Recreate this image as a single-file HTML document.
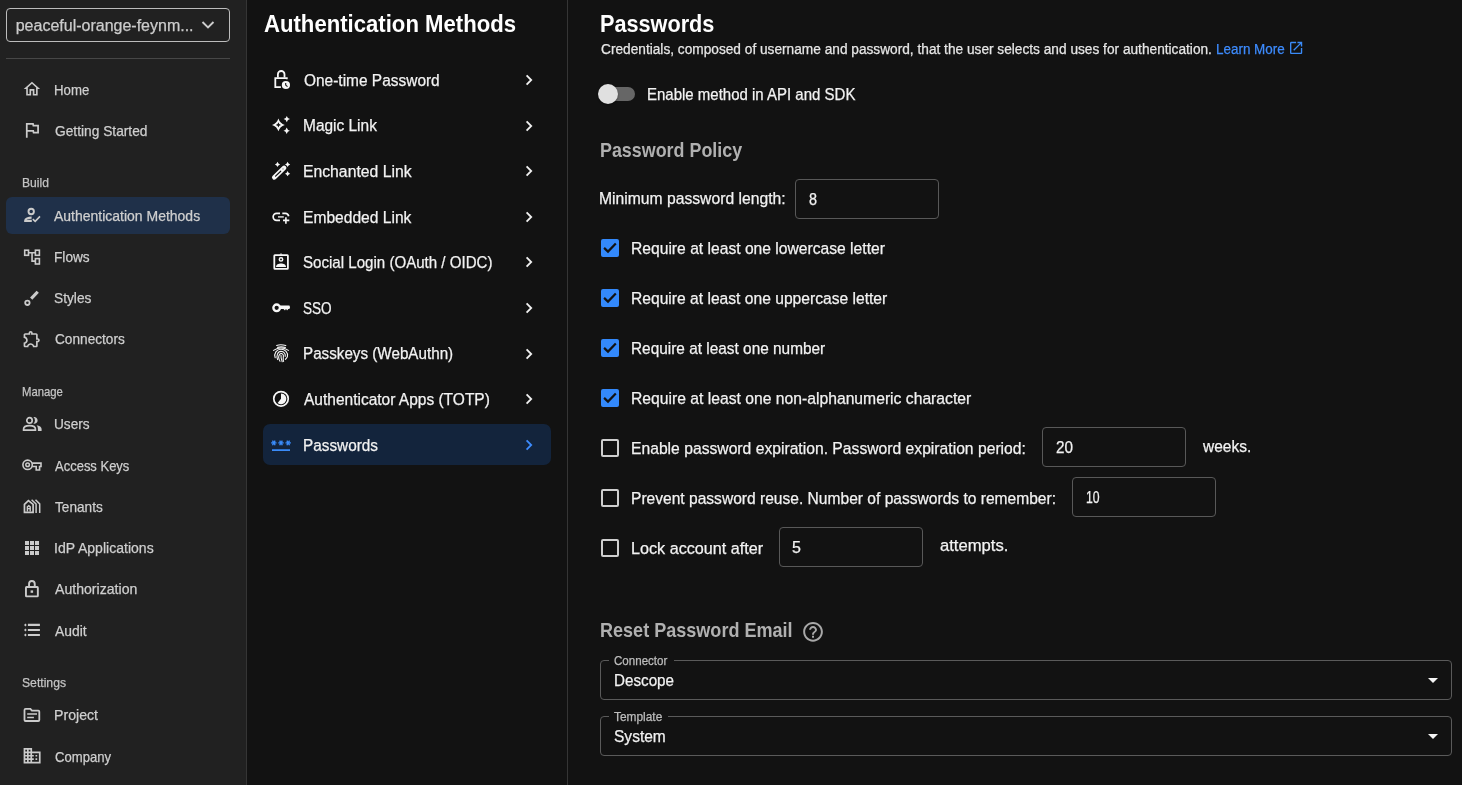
<!DOCTYPE html>
<html><head><meta charset="utf-8"><style>
html,body{margin:0;padding:0;}
body{width:1462px;height:785px;overflow:hidden;background:#121212;position:relative;font-family:"Liberation Sans",sans-serif;}
.t{position:absolute;line-height:1;white-space:pre;transform-origin:0 0;-webkit-text-stroke:0.25px currentColor;}
svg{overflow:visible}
</style></head><body>
<div style="position:absolute;left:0px;top:0px;width:246px;height:785px;box-sizing:border-box;background:#212121"></div><div style="position:absolute;left:246px;top:0px;width:1px;height:785px;box-sizing:border-box;background:#353535"></div><div style="position:absolute;left:567px;top:0px;width:1px;height:785px;box-sizing:border-box;background:#353535"></div><div style="position:absolute;left:6px;top:8px;width:224px;height:34px;box-sizing:border-box;border:1px solid #bdbdbd;border-radius:4px"></div><div style="position:absolute;left:6px;top:58px;width:224px;height:1px;box-sizing:border-box;background:#474747"></div><div style="position:absolute;left:6px;top:197px;width:224px;height:37px;box-sizing:border-box;background:#1f3049;border-radius:6px"></div><div style="position:absolute;left:263px;top:424px;width:288px;height:41px;box-sizing:border-box;background:#13243c;border-radius:7px"></div><div style="position:absolute;left:601px;top:87px;width:34px;height:14px;box-sizing:border-box;background:#666666;border-radius:7px"></div><div style="position:absolute;left:598px;top:84px;width:20px;height:20px;box-sizing:border-box;background:#e0e0e0;border-radius:50%;box-shadow:0 1px 2px rgba(0,0,0,.4)"></div><div style="position:absolute;left:795px;top:179px;width:144px;height:40px;box-sizing:border-box;border:1px solid #585858;border-radius:4px"></div><div style="position:absolute;left:1042px;top:427px;width:144px;height:40px;box-sizing:border-box;border:1px solid #585858;border-radius:4px"></div><div style="position:absolute;left:1072px;top:477px;width:144px;height:40px;box-sizing:border-box;border:1px solid #585858;border-radius:4px"></div><div style="position:absolute;left:779px;top:527px;width:144px;height:40px;box-sizing:border-box;border:1px solid #585858;border-radius:4px"></div><div style="position:absolute;left:601px;top:239px;width:18px;height:18px;box-sizing:border-box;background:#3389fb;border-radius:2px"></div><svg style="position:absolute;left:601px;top:239px" width="18" height="18" viewBox="0 0 18 18"><path d="M3.1 8.9 L7 12.6 L14.8 4.6" fill="none" stroke="#121212" stroke-width="2.2"/></svg><div style="position:absolute;left:601px;top:289px;width:18px;height:18px;box-sizing:border-box;background:#3389fb;border-radius:2px"></div><svg style="position:absolute;left:601px;top:289px" width="18" height="18" viewBox="0 0 18 18"><path d="M3.1 8.9 L7 12.6 L14.8 4.6" fill="none" stroke="#121212" stroke-width="2.2"/></svg><div style="position:absolute;left:601px;top:339px;width:18px;height:18px;box-sizing:border-box;background:#3389fb;border-radius:2px"></div><svg style="position:absolute;left:601px;top:339px" width="18" height="18" viewBox="0 0 18 18"><path d="M3.1 8.9 L7 12.6 L14.8 4.6" fill="none" stroke="#121212" stroke-width="2.2"/></svg><div style="position:absolute;left:601px;top:389px;width:18px;height:18px;box-sizing:border-box;background:#3389fb;border-radius:2px"></div><svg style="position:absolute;left:601px;top:389px" width="18" height="18" viewBox="0 0 18 18"><path d="M3.1 8.9 L7 12.6 L14.8 4.6" fill="none" stroke="#121212" stroke-width="2.2"/></svg><div style="position:absolute;left:601px;top:439px;width:18px;height:18px;box-sizing:border-box;border:2px solid #cfcfcf;border-radius:2px"></div><div style="position:absolute;left:601px;top:489px;width:18px;height:18px;box-sizing:border-box;border:2px solid #cfcfcf;border-radius:2px"></div><div style="position:absolute;left:601px;top:539px;width:18px;height:18px;box-sizing:border-box;border:2px solid #cfcfcf;border-radius:2px"></div><div style="position:absolute;left:600px;top:660px;width:852px;height:40px;box-sizing:border-box;border:1px solid #5a5a5a;border-radius:4px"></div><div style="position:absolute;left:609px;top:659px;width:64.60000000000002px;height:3px;box-sizing:border-box;background:#121212"></div><svg style="position:absolute;left:1427px;top:677px" width="12" height="7" viewBox="0 0 12 7"><path d="M1 1 L11 1 L6 6 Z" fill="#f5f5f5"/></svg><div style="position:absolute;left:600px;top:716px;width:852px;height:40px;box-sizing:border-box;border:1px solid #5a5a5a;border-radius:4px"></div><div style="position:absolute;left:609px;top:715px;width:59px;height:3px;box-sizing:border-box;background:#121212"></div><svg style="position:absolute;left:1427px;top:733px" width="12" height="7" viewBox="0 0 12 7"><path d="M1 1 L11 1 L6 6 Z" fill="#f5f5f5"/></svg><svg style="position:absolute;left:522px;top:72.0px" width="14" height="16" viewBox="0 0 14 16"><path d="M4.6 3.4 L9.2 8 L4.6 12.6" fill="none" stroke="#f0f0f0" stroke-width="1.8"/></svg><svg style="position:absolute;left:522px;top:117.6px" width="14" height="16" viewBox="0 0 14 16"><path d="M4.6 3.4 L9.2 8 L4.6 12.6" fill="none" stroke="#f0f0f0" stroke-width="1.8"/></svg><svg style="position:absolute;left:522px;top:163.2px" width="14" height="16" viewBox="0 0 14 16"><path d="M4.6 3.4 L9.2 8 L4.6 12.6" fill="none" stroke="#f0f0f0" stroke-width="1.8"/></svg><svg style="position:absolute;left:522px;top:208.8px" width="14" height="16" viewBox="0 0 14 16"><path d="M4.6 3.4 L9.2 8 L4.6 12.6" fill="none" stroke="#f0f0f0" stroke-width="1.8"/></svg><svg style="position:absolute;left:522px;top:254.4px" width="14" height="16" viewBox="0 0 14 16"><path d="M4.6 3.4 L9.2 8 L4.6 12.6" fill="none" stroke="#f0f0f0" stroke-width="1.8"/></svg><svg style="position:absolute;left:522px;top:300.0px" width="14" height="16" viewBox="0 0 14 16"><path d="M4.6 3.4 L9.2 8 L4.6 12.6" fill="none" stroke="#f0f0f0" stroke-width="1.8"/></svg><svg style="position:absolute;left:522px;top:345.6px" width="14" height="16" viewBox="0 0 14 16"><path d="M4.6 3.4 L9.2 8 L4.6 12.6" fill="none" stroke="#f0f0f0" stroke-width="1.8"/></svg><svg style="position:absolute;left:522px;top:391.2px" width="14" height="16" viewBox="0 0 14 16"><path d="M4.6 3.4 L9.2 8 L4.6 12.6" fill="none" stroke="#f0f0f0" stroke-width="1.8"/></svg><svg style="position:absolute;left:522px;top:436.8px" width="14" height="16" viewBox="0 0 14 16"><path d="M4.6 3.4 L9.2 8 L4.6 12.6" fill="none" stroke="#3d8bfd" stroke-width="1.8"/></svg><svg style="position:absolute;left:200px;top:18px" width="16" height="14" viewBox="0 0 16 14"><path d="M2.5 4 L8 9.5 L13.5 4" fill="none" stroke="#cccccc" stroke-width="1.9"/></svg>
<svg style="position:absolute;left:20px;top:78px" width="24" height="22" viewBox="0 0 24 22"><g transform="translate(2.1,1.2) scale(0.82)"><path fill="#cbcbcb" d="M12 5.69l5 4.5V18h-2v-6H9v6H7v-7.81l5-4.5M12 3L2 12h3v8h6v-6h2v6h6v-8h3L12 3z"/></g></svg><svg style="position:absolute;left:20px;top:119px" width="24" height="22" viewBox="0 0 24 22"><g transform="translate(1.55,0.5) scale(0.87)"><path fill="#cbcbcb" d="M12.36 6l.4 2H18v6h-3.36l-.4-2H7V6h5.36M14 4H5v17h2v-7h5.6l.4 2h7V6h-5.6L14 4z"/></g></svg><svg style="position:absolute;left:20px;top:205px" width="24" height="22" viewBox="0 0 24 22"><g fill="none" stroke="#cbcbcb"><circle cx="11.2" cy="6.5" r="2.7" stroke-width="1.9"/><path d="M11.6 12.6 C8.2 12.6 5.2 13.8 5.2 15.4 V15.9 H11.8" stroke-width="2.1"/><path d="M12.8 14.1 L15.2 16.4 L20 11.4" stroke-width="1.6"/></g></svg><svg style="position:absolute;left:20px;top:246px" width="24" height="22" viewBox="0 0 24 22"><g fill="none" stroke="#cbcbcb" stroke-width="1.6"><rect x="4.7" y="4.2" width="3.8" height="5.1"/><rect x="15.4" y="4.2" width="4" height="5.1"/><rect x="15.4" y="12.6" width="4" height="5.4"/><path d="M8.5 6.7 H15.4 M12.05 6.7 V15.1 H15.4"/></g></svg><svg style="position:absolute;left:20px;top:287px" width="24" height="22" viewBox="0 0 24 22"><g fill="none" stroke="#cbcbcb"><path d="M17.7 4.7 L11.2 11.6" stroke-width="3.1"/><circle cx="7.4" cy="15.8" r="2.2" stroke-width="1.8"/></g></svg><svg style="position:absolute;left:20px;top:328px" width="24" height="22" viewBox="0 0 24 22"><g transform="translate(1.94,1.03) scale(0.83)"><path fill="#cbcbcb" d="M10.5 4.5c.28 0 .5.22.5.5v2h6v6h2c.28 0 .5.22.5.5s-.22.5-.5.5h-2v6h-2.12c-.68-1.75-2.39-3-4.38-3s-3.7 1.25-4.38 3H4v-2.12c1.75-.68 3-2.39 3-4.38 0-1.99-1.24-3.7-2.99-4.38L4 7h6V5c0-.28.22-.5.5-.5m0-2C9.12 2.5 8 3.62 8 5H4c-1.1 0-1.99.9-1.99 2v3.8h.29c1.49 0 2.7 1.21 2.7 2.7s-1.21 2.7-2.7 2.7H2V20c0 1.1.9 2 2 2h3.8v-.3c0-1.49 1.21-2.7 2.7-2.7s2.7 1.21 2.7 2.7v.3H17c1.1 0 2-.9 2-2v-4c1.38 0 2.5-1.12 2.5-2.5S20.38 11 19 11V7c0-1.1-.9-2-2-2h-4c0-1.38-1.12-2.5-2.5-2.5z"/></g></svg><svg style="position:absolute;left:20px;top:413px" width="24" height="22" viewBox="0 0 24 22"><g fill="none" stroke="#cbcbcb" stroke-width="1.7"><circle cx="9.5" cy="7.4" r="2.7"/><path d="M3.6 17.1 V16.1 C3.6 13.6 6.6 12.6 9.5 12.6 C12.4 12.6 15.4 13.6 15.4 16.1 V17.1 Z"/></g><path fill="#cbcbcb" d="M13.4 4.1 A3.4 3.4 0 1 1 13.4 10.7 A4.3 4.3 0 0 0 13.4 4.1 Z M16.6 12.2 C19.6 12.7 21.6 14 21.6 16 V17.9 H17.9 V16 C17.9 14.5 17.5 13.2 16.6 12.2 Z"/></svg><svg style="position:absolute;left:20px;top:455px" width="24" height="22" viewBox="0 0 24 22"><g fill="none" stroke="#cbcbcb" stroke-width="1.6"><circle cx="7.6" cy="9.8" r="4.7"/><circle cx="7.6" cy="9.8" r="1.8" stroke-width="1.5"/><path d="M12.2 8.1 H21 V11.5 H19.6 V15 H16.2 V11.5 H12.2"/></g></svg><svg style="position:absolute;left:20px;top:496px" width="24" height="22" viewBox="0 0 24 22"><g fill="none" stroke="#cbcbcb" stroke-width="1.7"><path d="M4.45 16.3 V8.4 L8.4 4.7 L13.1 8.4 V16.3 Z"/><path d="M7.4 15.6 V10.9 L8.8 9.6 L10.2 10.9 V15.6 M7.4 12.6 H10.2" stroke-width="1.4"/><path d="M11.6 3.7 L16.1 8 V17.1 M15.5 3.7 L19.7 7.9 V17.1" stroke-width="1.5"/></g></svg><svg style="position:absolute;left:20px;top:537px" width="24" height="22" viewBox="0 0 24 22"><rect x="5.0" y="4.0" width="4" height="4" fill="#cbcbcb"/><rect x="5.0" y="9.0" width="4" height="4" fill="#cbcbcb"/><rect x="5.0" y="14.0" width="4" height="4" fill="#cbcbcb"/><rect x="10.0" y="4.0" width="4" height="4" fill="#cbcbcb"/><rect x="10.0" y="9.0" width="4" height="4" fill="#cbcbcb"/><rect x="10.0" y="14.0" width="4" height="4" fill="#cbcbcb"/><rect x="15.0" y="4.0" width="4" height="4" fill="#cbcbcb"/><rect x="15.0" y="9.0" width="4" height="4" fill="#cbcbcb"/><rect x="15.0" y="14.0" width="4" height="4" fill="#cbcbcb"/></svg><svg style="position:absolute;left:20px;top:578px" width="24" height="22" viewBox="0 0 24 22"><g fill="none" stroke="#cbcbcb" stroke-width="1.9"><path d="M9.05 8.6 V5.9 A2.85 2.85 0 0 1 14.75 5.9 V8.6"/><rect x="5.95" y="9.05" width="11.9" height="9.3" rx="0.6"/></g><rect x="10.6" y="12.4" width="2.5" height="2.4" fill="#cbcbcb"/></svg><svg style="position:absolute;left:20px;top:620px" width="24" height="22" viewBox="0 0 24 22"><g stroke="#cbcbcb" stroke-width="2.1"><path d="M7.9 4.9 H19.9 M7.9 10 H19.9 M7.9 15 H19.9"/></g><g fill="#cbcbcb"><path d="M5.4 3.4 L6.7 4.9 L5.4 6.5 L4.1 4.9Z M5.4 8.5 L6.7 10 L5.4 11.6 L4.1 10Z M5.4 13.5 L6.7 15 L5.4 16.6 L4.1 15Z"/></g></svg><svg style="position:absolute;left:20px;top:704px" width="24" height="22" viewBox="0 0 24 22"><g fill="none" stroke="#cbcbcb" stroke-width="1.8"><path d="M4.5 6 Q4.5 4.8 5.7 4.8 H10.4 L11.9 6.6 H18.3 Q19.3 6.6 19.3 7.6 V16 Q19.3 17 18.3 17 H5.5 Q4.5 17 4.5 16 Z"/><path d="M7.2 10 H17 M7.2 13.5 H13.9" stroke-width="1.7"/></g></svg><svg style="position:absolute;left:20px;top:746px" width="24" height="22" viewBox="0 0 24 22"><g transform="translate(1.9,-0.45) scale(0.85)"><path fill="#cbcbcb" d="M12 7V3H2v18h20V7H12zM6 19H4v-2h2v2zm0-4H4v-2h2v2zm0-4H4V9h2v2zm0-4H4V5h2v2zm4 12H8v-2h2v2zm0-4H8v-2h2v2zm0-4H8V9h2v2zm0-4H8V5h2v2zm10 12h-8v-2h2v-2h-2v-2h2v-2h-2V9h8v10zm-2-8h-2v2h2v-2zm0 4h-2v2h2v-2z"/></g></svg><svg style="position:absolute;left:270px;top:68px" width="24" height="24" viewBox="0 0 24 24"><g fill="none" stroke="#f7f7f7" stroke-width="1.8"><path d="M7.9 9.6 V6.3 A3.3 3.3 0 0 1 14.5 6.3 V9.6"/><path d="M16.8 11.3 V10.1 H5.3 V19.1 H10.9"/></g><circle cx="15.9" cy="17" r="4.1" fill="#f7f7f7"/><path d="M15.7 14.9 V17.1 L17.5 18.6" fill="none" stroke="#121212" stroke-width="1.1"/></svg><svg style="position:absolute;left:270px;top:114px" width="24" height="24" viewBox="0 0 24 24"><path d="M8.4 4.5 Q9.936 9.364 14.8 10.9 Q9.936 12.436 8.4 17.3 Q6.864000000000001 12.436 2.0 10.9 Q6.864000000000001 9.364 8.4 4.5 Z" fill="#f7f7f7"/><path d="M8.4 8.3 Q8.712 10.588000000000001 11.0 10.9 Q8.712 11.212 8.4 13.5 Q8.088000000000001 11.212 5.800000000000001 10.9 Q8.088000000000001 10.588000000000001 8.4 8.3 Z" fill="#121212"/><path d="M16.8 1.8999999999999995 Q17.44 4.459999999999999 20.0 5.1 Q17.44 5.74 16.8 8.3 Q16.16 5.74 13.600000000000001 5.1 Q16.16 4.459999999999999 16.8 1.8999999999999995 Z" fill="#f7f7f7"/><path d="M16.7 13.600000000000001 Q17.34 16.16 19.9 16.8 Q17.34 17.44 16.7 20.0 Q16.06 17.44 13.5 16.8 Q16.06 16.16 16.7 13.600000000000001 Z" fill="#f7f7f7"/></svg><svg style="position:absolute;left:270px;top:159px" width="24" height="24" viewBox="0 0 24 24"><path d="M4.3 18.4 L14.1 8.9" stroke="#f7f7f7" stroke-width="4.6" stroke-linecap="round"/><path d="M5.6 17.1 L10.7 12.2" stroke="#121212" stroke-width="1.2" stroke-linecap="round"/><circle cx="13.0" cy="9.9" r="0.7" fill="#777"/><path d="M7.5 2.8000000000000003 Q8.072 4.828 10.1 5.4 Q8.072 5.972 7.5 8.0 Q6.928 5.972 4.9 5.4 Q6.928 4.828 7.5 2.8000000000000003 Z" fill="#f7f7f7"/><path d="M17.6 2.8000000000000003 Q18.172 4.828 20.200000000000003 5.4 Q18.172 5.972 17.6 8.0 Q17.028000000000002 5.972 15.000000000000002 5.4 Q17.028000000000002 4.828 17.6 2.8000000000000003 Z" fill="#f7f7f7"/><path d="M17.6 12.1 Q18.172 14.128 20.200000000000003 14.7 Q18.172 15.271999999999998 17.6 17.3 Q17.028000000000002 15.271999999999998 15.000000000000002 14.7 Q17.028000000000002 14.128 17.6 12.1 Z" fill="#f7f7f7"/></svg><svg style="position:absolute;left:270px;top:205px" width="24" height="24" viewBox="0 0 24 24"><g fill="none" stroke="#f7f7f7" stroke-width="1.7"><path d="M10 8.4 H6.6 A3.45 3.45 0 0 0 6.6 15.3 H10"/><path d="M12.3 8.4 H15.4 C16.9 8.4 18.3 9.6 18.7 11.3"/><path d="M13 15.4 H19.3 M15.9 12.2 V18.7" stroke-width="1.6"/><path d="M8 11.9 H13.8" stroke="#dddddd" stroke-width="1.5"/></g></svg><svg style="position:absolute;left:270px;top:250px" width="24" height="24" viewBox="0 0 24 24"><g fill="none" stroke="#f7f7f7" stroke-width="1.8"><rect x="4.3" y="5.2" width="13.6" height="13.6" rx="0.6"/><circle cx="11" cy="9.4" r="1.7" stroke-width="1.5"/></g><path d="M9.4 4.4 Q11 2.6 12.6 4.4 Z" fill="#f7f7f7"/><path d="M6 16.9 C6 14.6 8.5 13.5 11 13.5 C13.5 13.5 16 14.6 16 16.9 Z" fill="#f7f7f7"/></svg><svg style="position:absolute;left:270px;top:296px" width="24" height="24" viewBox="0 0 24 24"><circle cx="6.65" cy="11.8" r="3.3" fill="none" stroke="#f7f7f7" stroke-width="2.35"/><path d="M9.9 9.6 H19.4 L20.1 11.2 L19.4 12.9 H18.2 L17.6 14.6 L16.8 12.9 L16.0 14.6 L15.2 12.9 L14.4 14.6 L13.6 12.9 H9.9 Z" fill="#f7f7f7"/></svg><svg style="position:absolute;left:270px;top:342px" width="24" height="24" viewBox="0 0 24 24"><g fill="none" stroke="#f7f7f7" stroke-width="1.1" stroke-linecap="round"><path d="M6.6 3.4 Q11 2 15.8 3.6"/><path d="M7.6 5.4 Q11.2 4.3 15.4 5.5"/><path d="M3.6 8.4 Q11 3.6 18.4 8.4"/><path d="M5.2 15.8 C3.6 11.5 6.6 7.3 11 7.3 C15.2 7.3 18.2 10.4 17.4 14.6 C17 16.2 15.6 16.6 15.4 17.4"/><path d="M7.6 17.6 C6 14 7.6 9.4 11 9.4 C14 9.4 15.8 12 15.2 14.4"/><path d="M10 19.2 C8.6 17 8.4 14 9.6 12.4 C10.6 11 12.8 11.2 13.3 13.2 C13.7 15 12.6 16.4 13.6 19.4"/><path d="M11 13.4 C10.8 16 11.6 18.2 12.2 19.8"/></g></svg><svg style="position:absolute;left:270px;top:387px" width="24" height="24" viewBox="0 0 24 24"><circle cx="11" cy="11.8" r="7.25" fill="none" stroke="#f7f7f7" stroke-width="1.7"/><path d="M11 11.8 V6.4 A5.4 5.4 0 1 1 7.62 16.01 Z" fill="#f7f7f7"/></svg><svg style="position:absolute;left:268px;top:433px" width="30" height="24" viewBox="0 0 30 24"><g transform="translate(2.2,0.9) scale(0.9)"><path fill="#3a8bf8" d="M2 17h20v2H2v-2zm1.15-4.05L4 11.47l.85 1.48 1.3-.75-.85-1.48H7v-1.5H5.3l.85-1.47L4.85 7 4 8.47 3.15 7l-1.3.75.85 1.47H1v1.5h1.7l-.85 1.48 1.3.75zm6.7-.75 1.3.75.85-1.48.85 1.48 1.3-.75-.85-1.48H15v-1.5h-1.7l.85-1.47-1.3-.75L12 8.47 11.15 7l-1.3.75.85 1.47H9v1.5h1.7l-.85 1.48zM23 9.22h-1.7l.85-1.47-1.3-.75L20 8.47 19.15 7l-1.3.75.85 1.47H17v1.5h1.7l-.85 1.48 1.3.75.85-1.48.85 1.48 1.3-.75-.85-1.48H23v-1.5z"/></g></svg><svg style="position:absolute;left:1284px;top:36px" width="24" height="24" viewBox="0 0 24 24"><g transform="translate(3.97,3.77) scale(0.678)"><path fill="#3a8bf8" d="M19 19H5V5h7V3H5c-1.11 0-2 .9-2 2v14c0 1.1.89 2 2 2h14c1.1 0 2-.9 2-2v-7h-2v7zM14 3v2h3.59l-9.83 9.83 1.41 1.41L19 6.41V10h2V3h-7z"/></g></svg><svg style="position:absolute;left:800px;top:619px" width="26" height="26" viewBox="0 0 26 26"><g transform="translate(1.2,1.0) scale(0.985)"><path fill="#a8a8a8" d="M11 18h2v-2h-2v2zm1-16C6.48 2 2 6.48 2 12s4.48 10 10 10 10-4.48 10-10S17.52 2 12 2zm0 18c-4.41 0-8-3.59-8-8s3.59-8 8-8 8 3.59 8 8-3.59 8-8 8zm0-14c-2.21 0-4 1.79-4 4h2c0-1.1.9-2 2-2s2 .9 2 2c0 2-3 1.75-3 5h2c0-2.25 3-2.5 3-5 0-2.21-1.79-4-4-4z"/></g></svg>
<div style="position:absolute;left:0;top:0;width:1462px;height:785px;will-change:transform"><div class="t" style="left:15.70px;top:18px;font-size:16px;font-weight:400;color:#cccccc;">peaceful-orange-feynm...</div><div class="t" style="left:53.78px;top:83px;font-size:14.3px;font-weight:400;color:#cfcfcf;transform:scaleX(0.9243);">Home</div><div class="t" style="left:54.70px;top:124px;font-size:14.3px;font-weight:400;color:#cfcfcf;transform:scaleX(0.9615);">Getting Started</div><div class="t" style="left:21.58px;top:176px;font-size:13.2px;font-weight:400;color:#c4c4c4;transform:scaleX(0.9179);">Build</div><div class="t" style="left:54.30px;top:209px;font-size:14.3px;font-weight:400;color:#cfcfcf;transform:scaleX(0.9779);">Authentication Methods</div><div class="t" style="left:53.54px;top:250px;font-size:14.3px;font-weight:400;color:#cfcfcf;transform:scaleX(0.9556);">Flows</div><div class="t" style="left:53.54px;top:291px;font-size:14.3px;font-weight:400;color:#cfcfcf;transform:scaleX(0.9605);">Styles</div><div class="t" style="left:54.50px;top:332px;font-size:14.3px;font-weight:400;color:#cfcfcf;transform:scaleX(0.9548);">Connectors</div><div class="t" style="left:21.64px;top:385px;font-size:13.2px;font-weight:400;color:#c4c4c4;transform:scaleX(0.8587);">Manage</div><div class="t" style="left:53.54px;top:417px;font-size:14.3px;font-weight:400;color:#cfcfcf;transform:scaleX(0.9556);">Users</div><div class="t" style="left:54.50px;top:459px;font-size:14.3px;font-weight:400;color:#cfcfcf;transform:scaleX(0.9085);">Access Keys</div><div class="t" style="left:54.50px;top:500px;font-size:14.3px;font-weight:400;color:#cfcfcf;transform:scaleX(0.9540);">Tenants</div><div class="t" style="left:53.52px;top:541px;font-size:14.3px;font-weight:400;color:#cfcfcf;transform:scaleX(0.9820);">IdP Applications</div><div class="t" style="left:54.50px;top:582px;font-size:14.3px;font-weight:400;color:#cfcfcf;transform:scaleX(0.9867);">Authorization</div><div class="t" style="left:54.50px;top:624px;font-size:14.3px;font-weight:400;color:#cfcfcf;transform:scaleX(0.9697);">Audit</div><div class="t" style="left:21.58px;top:676px;font-size:13.2px;font-weight:400;color:#c4c4c4;transform:scaleX(0.9234);">Settings</div><div class="t" style="left:53.51px;top:708px;font-size:14.3px;font-weight:400;color:#cfcfcf;transform:scaleX(0.9886);">Project</div><div class="t" style="left:54.50px;top:750px;font-size:14.3px;font-weight:400;color:#cfcfcf;transform:scaleX(0.9164);">Company</div><div class="t" style="left:264.00px;top:12px;font-size:24.2px;font-weight:700;color:#ffffff;transform:scaleX(0.9149);-webkit-text-stroke:0;">Authentication Methods</div><div class="t" style="left:303.60px;top:72px;font-size:16.3px;font-weight:400;color:#f2f2f2;transform:scaleX(0.9493);">One-time Password</div><div class="t" style="left:302.65px;top:117px;font-size:16.3px;font-weight:400;color:#f2f2f2;transform:scaleX(0.9494);">Magic Link</div><div class="t" style="left:302.63px;top:163px;font-size:16.3px;font-weight:400;color:#f2f2f2;transform:scaleX(0.9667);">Enchanted Link</div><div class="t" style="left:302.64px;top:209px;font-size:16.3px;font-weight:400;color:#f2f2f2;transform:scaleX(0.9580);">Embedded Link</div><div class="t" style="left:302.57px;top:254px;font-size:16.3px;font-weight:400;color:#f2f2f2;transform:scaleX(0.9266);">Social Login (OAuth / OIDC)</div><div class="t" style="left:302.67px;top:300px;font-size:16.3px;font-weight:400;color:#f2f2f2;transform:scaleX(0.8333);">SSO</div><div class="t" style="left:302.57px;top:345px;font-size:16.3px;font-weight:400;color:#f2f2f2;transform:scaleX(0.9340);">Passkeys (WebAuthn)</div><div class="t" style="left:303.50px;top:391px;font-size:16.3px;font-weight:400;color:#f2f2f2;transform:scaleX(0.9523);">Authenticator Apps (TOTP)</div><div class="t" style="left:302.56px;top:437px;font-size:16.3px;font-weight:400;color:#f2f2f2;transform:scaleX(0.9418);">Passwords</div><div class="t" style="left:599.80px;top:12px;font-size:24.2px;font-weight:700;color:#ffffff;transform:scaleX(0.8952);-webkit-text-stroke:0;">Passwords</div><div class="t" style="left:600.70px;top:42px;font-size:14px;font-weight:400;color:#e6e6e6;transform:scaleX(0.9776);">Credentials, composed of username and password, that the user selects and uses for authentication.</div><div class="t" style="left:1215.54px;top:42px;font-size:14px;font-weight:400;color:#3d8bfd;transform:scaleX(0.9600);">Learn More</div><div class="t" style="left:646.88px;top:86px;font-size:16.3px;font-weight:400;color:#f2f2f2;transform:scaleX(0.9209);">Enable method in API and SDK</div><div class="t" style="left:599.52px;top:140px;font-size:20.4px;font-weight:700;color:#b0b0b0;transform:scaleX(0.8770);-webkit-text-stroke:0;">Password Policy</div><div class="t" style="left:599.44px;top:190px;font-size:16.3px;font-weight:400;color:#f2f2f2;transform:scaleX(0.9635);">Minimum password length:</div><div class="t" style="left:809.40px;top:192px;font-size:16px;font-weight:400;color:#f2f2f2;transform:scaleX(0.9000);">8</div><div class="t" style="left:630.74px;top:240px;font-size:16.3px;font-weight:400;color:#f2f2f2;transform:scaleX(0.9608);">Require at least one lowercase letter</div><div class="t" style="left:630.74px;top:290px;font-size:16.3px;font-weight:400;color:#f2f2f2;transform:scaleX(0.9598);">Require at least one uppercase letter</div><div class="t" style="left:630.75px;top:340px;font-size:16.3px;font-weight:400;color:#f2f2f2;transform:scaleX(0.9454);">Require at least one number</div><div class="t" style="left:630.74px;top:390px;font-size:16.3px;font-weight:400;color:#f2f2f2;transform:scaleX(0.9639);">Require at least one non-alphanumeric character</div><div class="t" style="left:630.84px;top:440px;font-size:16.3px;font-weight:400;color:#f2f2f2;transform:scaleX(0.9632);">Enable password expiration. Password expiration period:</div><div class="t" style="left:1056.30px;top:440px;font-size:16px;font-weight:400;color:#f2f2f2;transform:scaleX(0.9556);">20</div><div class="t" style="left:1202.60px;top:438px;font-size:16.3px;font-weight:400;color:#f2f2f2;transform:scaleX(0.9520);">weeks.</div><div class="t" style="left:630.84px;top:490px;font-size:16.3px;font-weight:400;color:#f2f2f2;transform:scaleX(0.9566);">Prevent password reuse. Number of passwords to remember:</div><div class="t" style="left:1086.24px;top:490px;font-size:16px;font-weight:400;color:#f2f2f2;transform:scaleX(0.7647);">10</div><div class="t" style="left:630.81px;top:540px;font-size:16.3px;font-weight:400;color:#f2f2f2;transform:scaleX(0.9932);">Lock account after</div><div class="t" style="left:792.00px;top:540px;font-size:16px;font-weight:400;color:#f2f2f2;">5</div><div class="t" style="left:939.80px;top:537px;font-size:16.3px;font-weight:400;color:#f2f2f2;transform:scaleX(1.0212);">attempts.</div><div class="t" style="left:599.91px;top:620px;font-size:20.4px;font-weight:700;color:#b0b0b0;transform:scaleX(0.8852);-webkit-text-stroke:0;">Reset Password Email</div><div class="t" style="left:614.30px;top:655px;font-size:12.2px;font-weight:400;color:#bdbdbd;transform:scaleX(0.9491);">Connector</div><div class="t" style="left:614.08px;top:672px;font-size:16.5px;font-weight:400;color:#f2f2f2;transform:scaleX(0.9219);">Descope</div><div class="t" style="left:614.30px;top:711px;font-size:12.2px;font-weight:400;color:#bdbdbd;transform:scaleX(0.9755);">Template</div><div class="t" style="left:614.36px;top:728px;font-size:16.5px;font-weight:400;color:#f2f2f2;transform:scaleX(0.9415);">System</div></div>
</body></html>
